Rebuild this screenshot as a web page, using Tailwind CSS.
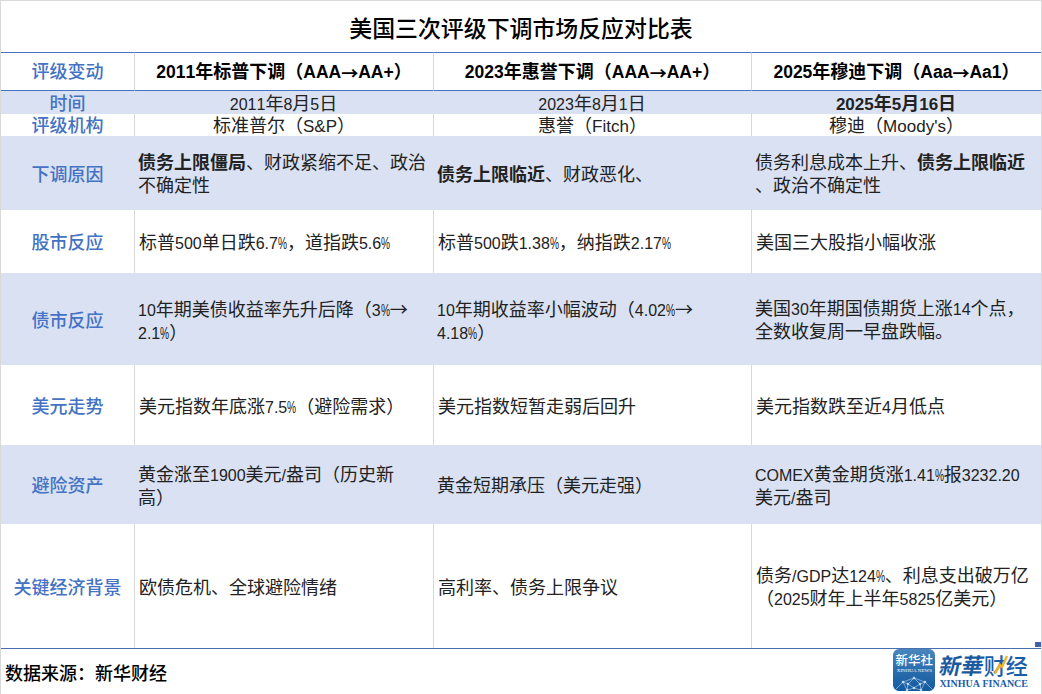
<!DOCTYPE html>
<html lang="zh">
<head>
    <meta charset="UTF-8">
    <title>美国三次评级下调市场反应对比表</title>
    <script src="https://cdn.jsdelivr.net/npm/@tailwindcss/browser@4"></script>
</head>
<body class="w-[1042px] h-[694px] overflow-hidden bg-white text-[18px] leading-[23px] text-[#222] [font-kerning:none] font-['Liberation_Sans','Noto_Sans_CJK_SC',sans-serif]">
<div class="relative flex h-full flex-col border-l border-t border-r border-[#d9d9d9]">

    <!-- Title -->
    <div class="flex h-[51px] shrink-0 items-center justify-center pt-[5px] text-[22.9px] font-medium text-black">美国三次评级下调市场反应对比表</div>

    <!-- Table -->
    <div class="grid shrink-0 grid-cols-[133px_299px_318px_290px] grid-rows-[39px_23px_22px_74px_63px_92px_80px_79px_124px] border-b border-[#4a6fb0]">

        <!-- 评级变动 -->
        <div class="flex items-center justify-center border-y border-[#4472c4] pt-[2px] font-medium text-[#4472c4]">评级变动</div>
        <div class="flex items-center justify-center whitespace-nowrap border-y border-l border-y-[#4472c4] border-l-[#d9d9d9] pt-[2px] font-bold text-black"><span class="text-[17.5px]">2011</span>年标普下调（<span class="text-[17.5px]">AAA</span><span class="text-[17px] font-['Noto_Sans_CJK_SC']">→</span><span class="text-[17.5px]">AA+</span>）</div>
        <div class="flex items-center justify-center whitespace-nowrap border-y border-l border-y-[#4472c4] border-l-[#d9d9d9] pt-[2px] font-bold text-black"><span class="text-[17.5px]">2023</span>年惠誉下调（<span class="text-[17.5px]">AAA</span><span class="text-[17px] font-['Noto_Sans_CJK_SC']">→</span><span class="text-[17.5px]">AA+</span>）</div>
        <div class="flex items-center justify-center whitespace-nowrap border-y border-l border-y-[#4472c4] border-l-[#d9d9d9] pt-[2px] font-bold text-black"><span class="text-[17.5px]">2025</span>年穆迪下调（<span class="text-[17.5px]">Aaa</span><span class="text-[17px] font-['Noto_Sans_CJK_SC']">→</span><span class="text-[17.5px]">Aa1</span>）</div>

        <!-- 时间 -->
        <div class="flex items-center justify-center bg-[#d9e1f2] pt-[3px] font-medium text-[#4472c4]">时间</div>
        <div class="flex items-center justify-center bg-[#d9e1f2] pt-[3px]"><div><span class="text-[16px]">2011</span>年<span class="text-[16px]">8</span>月<span class="text-[16px]">5</span>日</div></div>
        <div class="flex items-center justify-center bg-[#d9e1f2] pt-[3px]"><div><span class="text-[16px]">2023</span>年<span class="text-[16px]">8</span>月<span class="text-[16px]">1</span>日</div></div>
        <div class="flex items-center justify-center bg-[#d9e1f2] pt-[3px] font-bold"><div><span class="text-[17px]">2025</span>年<span class="text-[17px]">5</span>月<span class="text-[17px]">16</span>日</div></div>

        <!-- 评级机构 -->
        <div class="flex items-center justify-center pt-[3px] font-medium text-[#4472c4]">评级机构</div>
        <div class="flex items-center justify-center border-l border-[#d9d9d9] pt-[3px]"><div>标准普尔（<span class="text-[17px]">S&amp;P</span>）</div></div>
        <div class="flex items-center justify-center border-l border-[#d9d9d9] pt-[3px]"><div>惠誉（<span class="text-[17px]">Fitch</span>）</div></div>
        <div class="flex items-center justify-center border-l border-[#d9d9d9] pt-[3px]"><div>穆迪（<span class="text-[17px]">Moody's</span>）</div></div>

        <!-- 下调原因 -->
        <div class="flex items-center justify-center bg-[#d9e1f2] pt-[4px] font-medium text-[#4472c4]">下调原因</div>
        <div class="flex items-center bg-[#d9e1f2] pl-[4px] pt-[4px]"><p class="whitespace-nowrap"><b>债务上限僵局</b>、财政紧缩不足、政治<br>不确定性</p></div>
        <div class="flex items-center bg-[#d9e1f2] pl-[4px] pt-[4px]"><p class="whitespace-nowrap"><b>债务上限临近</b>、财政恶化、</p></div>
        <div class="flex items-center bg-[#d9e1f2] pl-[4px] pt-[4px]"><p class="whitespace-nowrap">债务利息成本上升、<b>债务上限临近</b><br>、政治不确定性</p></div>

        <!-- 股市反应 -->
        <div class="flex items-center justify-center pt-[4px] font-medium text-[#4472c4]">股市反应</div>
        <div class="flex items-center border-l border-[#d9d9d9] pl-[4px] pt-[4px]"><p class="whitespace-nowrap">标普<span class="text-[16px]">500</span>单日跌<span class="text-[16px]">6.7</span><span class="inline-block w-[9px] origin-left scale-x-[.64] text-[16px]">%</span>，道指跌<span class="text-[16px]">5.6</span><span class="inline-block w-[9px] origin-left scale-x-[.64] text-[16px]">%</span></p></div>
        <div class="flex items-center border-l border-[#d9d9d9] pl-[4px] pt-[4px]"><p class="whitespace-nowrap">标普<span class="text-[16px]">500</span>跌<span class="text-[16px]">1.38</span><span class="inline-block w-[9px] origin-left scale-x-[.64] text-[16px]">%</span>，纳指跌<span class="text-[16px]">2.17</span><span class="inline-block w-[9px] origin-left scale-x-[.64] text-[16px]">%</span></p></div>
        <div class="flex items-center border-l border-[#d9d9d9] pl-[4px] pt-[4px]">美国三大股指小幅收涨</div>

        <!-- 债市反应 -->
        <div class="flex items-center justify-center bg-[#d9e1f2] pt-[4px] font-medium text-[#4472c4]">债市反应</div>
        <div class="flex items-center bg-[#d9e1f2] pl-[4px] pt-[4px]"><p class="whitespace-nowrap"><span class="text-[16px]">10</span>年期美债收益率先升后降（<span class="text-[16px]">3</span><span class="inline-block w-[9px] origin-left scale-x-[.64] text-[16px]">%</span><span class="font-['Noto_Sans_CJK_SC']">→</span><br><span class="text-[16px]">2.1</span><span class="inline-block w-[9px] origin-left scale-x-[.64] text-[16px]">%</span>）</p></div>
        <div class="flex items-center bg-[#d9e1f2] pl-[4px] pt-[4px]"><p class="whitespace-nowrap"><span class="text-[16px]">10</span>年期收益率小幅波动（<span class="text-[16px]">4.02</span><span class="inline-block w-[9px] origin-left scale-x-[.64] text-[16px]">%</span><span class="font-['Noto_Sans_CJK_SC']">→</span><br><span class="text-[16px]">4.18</span><span class="inline-block w-[9px] origin-left scale-x-[.64] text-[16px]">%</span>）</p></div>
        <div class="flex items-center bg-[#d9e1f2] pl-[4px] pt-[4px]"><p class="whitespace-nowrap">美国<span class="text-[16px]">30</span>年期国债期货上涨<span class="text-[16px]">14</span>个点，<br>全数收复周一早盘跌幅。</p></div>

        <!-- 美元走势 -->
        <div class="flex items-center justify-center pt-[4px] font-medium text-[#4472c4]">美元走势</div>
        <div class="flex items-center border-l border-[#d9d9d9] pl-[4px] pt-[4px]"><p class="whitespace-nowrap">美元指数年底涨<span class="text-[16px]">7.5</span><span class="inline-block w-[9px] origin-left scale-x-[.64] text-[16px]">%</span>（避险需求）</p></div>
        <div class="flex items-center border-l border-[#d9d9d9] pl-[4px] pt-[4px]">美元指数短暂走弱后回升</div>
        <div class="flex items-center border-l border-[#d9d9d9] pl-[4px] pt-[4px]"><p class="whitespace-nowrap">美元指数跌至近<span class="text-[16px]">4</span>月低点</p></div>

        <!-- 避险资产 -->
        <div class="flex items-center justify-center bg-[#d9e1f2] pt-[4px] font-medium text-[#4472c4]">避险资产</div>
        <div class="flex items-center bg-[#d9e1f2] pl-[4px] pt-[4px]"><p class="whitespace-nowrap">黄金涨至<span class="text-[16px]">1900</span>美元<span class="text-[16px]">/</span>盎司（历史新<br>高）</p></div>
        <div class="flex items-center bg-[#d9e1f2] pl-[4px] pt-[4px]">黄金短期承压（美元走强）</div>
        <div class="flex items-center bg-[#d9e1f2] pl-[4px] pt-[4px]"><p class="whitespace-nowrap"><span class="text-[16px]">COMEX</span>黄金期货涨<span class="text-[16px]">1.41</span><span class="inline-block w-[9px] origin-left scale-x-[.64] text-[16px]">%</span>报<span class="text-[16px]">3232.20</span><br>美元<span class="text-[16px]">/</span>盎司</p></div>

        <!-- 关键经济背景 -->
        <div class="flex items-center justify-center pt-[4px] font-medium text-[#4472c4]">关键经济背景</div>
        <div class="flex items-center border-l border-[#d9d9d9] pl-[4px] pt-[4px]">欧债危机、全球避险情绪</div>
        <div class="flex items-center border-l border-[#d9d9d9] pl-[4px] pt-[4px]">高利率、债务上限争议</div>
        <div class="flex items-center border-l border-[#d9d9d9] pl-[4px] pt-[4px]"><p class="whitespace-nowrap">债务<span class="text-[16px]">/GDP</span>达<span class="text-[16px]">124</span><span class="inline-block w-[9px] origin-left scale-x-[.64] text-[16px]">%</span>、利息支出破万亿<br>（<span class="text-[16px]">2025</span>财年上半年<span class="text-[16px]">5825</span>亿美元）</p></div>
    </div>

    <!-- Excel fill handle -->
    <div class="absolute right-0 top-[641px] h-[5px] w-[6px] bg-[#3f63ad]"></div>

    <!-- Footer -->
    <div class="flex flex-1 items-center justify-between border-b border-[#d9d9d9] pl-[4px] pr-[13px]">
        <div class="pt-[5px] font-medium text-black">数据来源：新华财经</div>
        <div class="flex items-center gap-[4px] pb-[3px]">
            <!-- Xinhua News badge -->
            <div class="relative flex h-[42px] w-[42px] flex-col items-center overflow-hidden rounded-[6px] bg-gradient-to-b from-[#4b86bd] via-[#2a6eae] to-[#12599f] text-white">
                <span class="mt-[5px] text-[12.5px] leading-[14px] font-medium whitespace-nowrap">新华社</span>
                <span class="text-[5px] leading-[6px] font-['Liberation_Serif'] whitespace-nowrap">XINHUA NEWS</span>
                <svg class="absolute bottom-0 left-0" width="42" height="18" viewBox="0 0 42 18" fill="#e3f0fa" stroke="#bcd8f0" stroke-width="0.6">
                    <path fill="none" d="M2 17 10 9 21 5 32 9 40 17M10 9 14 17M32 9 28 17M21 5 15 11 21 15 27 11 21 5M10 9 15 11 14 17 21 15 28 17 27 11 32 9"/>
                    <circle cx="10" cy="9" r="1"/><circle cx="21" cy="5" r="1"/><circle cx="32" cy="9" r="1"/><circle cx="15" cy="11" r="1"/><circle cx="27" cy="11" r="1"/><circle cx="21" cy="15" r="1"/><circle cx="14" cy="17" r="1"/><circle cx="28" cy="17" r="1"/>
                </svg>
            </div>
            <!-- Xinhua Finance wordmark -->
            <div class="flex flex-col items-center">
                <div class="relative text-[22px] leading-[27px] text-[#1b5ea8] font-['Noto_Sans_CJK_SC',sans-serif] font-medium whitespace-nowrap">
                    <span class="inline-block -skew-x-12 font-bold text-[#1a5a9e]">新華</span>财经
                    <svg class="absolute left-[54px] top-[3px]" width="14" height="20" viewBox="0 0 14 20" fill="none" stroke="#e9b52c" stroke-width="2.4"><path d="M1 19 6 11 8 13 13 2"/></svg>
                </div>
                <div class="text-[10px] leading-[11px] font-bold text-[#1b5ea8] font-['Liberation_Serif',serif] whitespace-nowrap">XINHUA FINANCE</div>
            </div>
        </div>
    </div>
</div>
</body>
</html>
